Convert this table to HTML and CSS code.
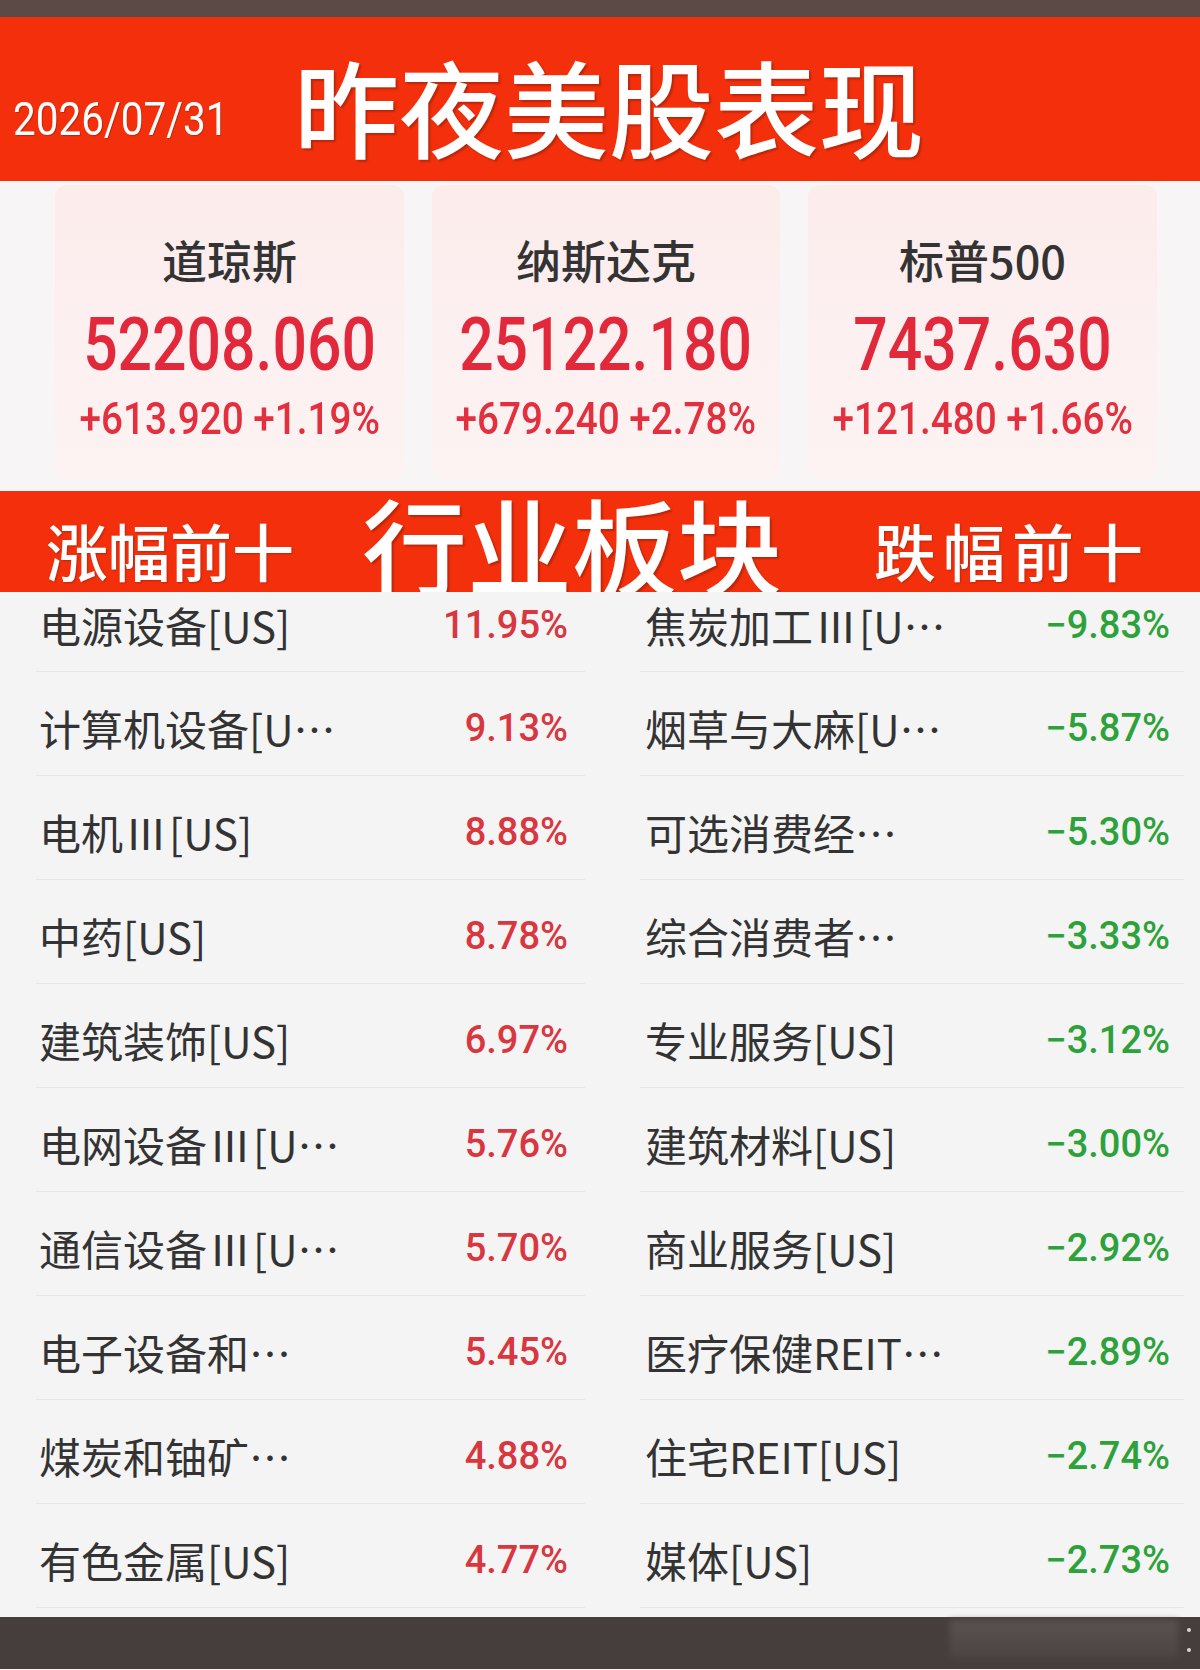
FILE: index.html
```html
<!DOCTYPE html>
<html lang="zh-CN">
<head>
<meta charset="utf-8">
<title>昨夜美股表现</title>
<link rel="stylesheet" href="styles.css">
</head>
<body>
<div class="page">
  <div class="topbar"></div>
  <header class="header">
    <div class="date"><span class="cond">2026/07/31</span></div>
    <h1 class="title">昨夜美股表现</h1>
  </header>

  <section class="cards">
    <div class="card">
      <div class="card-name">道琼斯</div>
      <div class="card-value"><span class="cond">52208.060</span></div>
      <div class="card-change"><span class="cond">+613.920 +1.19%</span></div>
    </div>
    <div class="card">
      <div class="card-name">纳斯达克</div>
      <div class="card-value"><span class="cond">25122.180</span></div>
      <div class="card-change"><span class="cond">+679.240 +2.78%</span></div>
    </div>
    <div class="card">
      <div class="card-name">标普500</div>
      <div class="card-value"><span class="cond">7437.630</span></div>
      <div class="card-change"><span class="cond">+121.480 +1.66%</span></div>
    </div>
  </section>

  <div class="sector-bar">
    <span class="side-label up-label">涨幅前十</span>
    <span class="sector-title">行业板块</span>
    <span class="side-label down-label">跌幅前十</span>
  </div>

  <section class="lists">
    <ul class="list">
      <li class="row"><span class="name">电源设备[US]</span><span class="pct up">11.95%</span></li>
      <li class="row"><span class="name">计算机设备[U…</span><span class="pct up">9.13%</span></li>
      <li class="row"><span class="name">电机<span class="roman">Ⅲ</span>[US]</span><span class="pct up">8.88%</span></li>
      <li class="row"><span class="name">中药[US]</span><span class="pct up">8.78%</span></li>
      <li class="row"><span class="name">建筑装饰[US]</span><span class="pct up">6.97%</span></li>
      <li class="row"><span class="name">电网设备<span class="roman">Ⅲ</span>[U…</span><span class="pct up">5.76%</span></li>
      <li class="row"><span class="name">通信设备<span class="roman">Ⅲ</span>[U…</span><span class="pct up">5.70%</span></li>
      <li class="row"><span class="name">电子设备和…</span><span class="pct up">5.45%</span></li>
      <li class="row"><span class="name">煤炭和铀矿…</span><span class="pct up">4.88%</span></li>
      <li class="row"><span class="name">有色金属[US]</span><span class="pct up">4.77%</span></li>
    </ul>
    <ul class="list list-right">
      <li class="row"><span class="name">焦炭加工<span class="roman">Ⅲ</span>[U…</span><span class="pct down">−9.83%</span></li>
      <li class="row"><span class="name">烟草与大麻[U…</span><span class="pct down">−5.87%</span></li>
      <li class="row"><span class="name">可选消费经…</span><span class="pct down">−5.30%</span></li>
      <li class="row"><span class="name">综合消费者…</span><span class="pct down">−3.33%</span></li>
      <li class="row"><span class="name">专业服务[US]</span><span class="pct down">−3.12%</span></li>
      <li class="row"><span class="name">建筑材料[US]</span><span class="pct down">−3.00%</span></li>
      <li class="row"><span class="name">商业服务[US]</span><span class="pct down">−2.92%</span></li>
      <li class="row"><span class="name">医疗保健REIT…</span><span class="pct down">−2.89%</span></li>
      <li class="row"><span class="name">住宅REIT[US]</span><span class="pct down">−2.74%</span></li>
      <li class="row"><span class="name">媒体[US]</span><span class="pct down">−2.73%</span></li>
    </ul>
  </section>

  <footer class="bottombar">
    <div class="watermark"></div>
    <div class="dots"><span class="dot"></span><span class="dot"></span></div>
  </footer>
</div>
</body>
</html>
```

FILE: styles.css
```css
* { box-sizing: border-box; }
html, body { margin: 0; padding: 0; }
body {
  width: 1200px;
  height: 1670px;
  overflow: hidden;
  background: #f4f4f4;
  font-family: "Noto Sans CJK SC", "Noto Sans", sans-serif;
}
.page { width: 1200px; display: flex; flex-direction: column; }

.topbar { height: 17px; background: #5b4a46; }

.header {
  height: 164px;
  background: #f4300c;
  display: flex;
  align-items: center;
  padding-top: 10px;
}
.date {
  width: 294px;
  padding-left: 13px;
  margin-top: 30px;
  color: #ffffff;
  font-family: Roboto, "Liberation Sans", sans-serif;
  font-size: 46px;
  line-height: 50px;
  text-shadow: 1px 1px 1px rgba(90, 20, 10, 0.35);
}
.date .cond { display: inline-block; transform: scaleX(0.88); transform-origin: left center; }
.title {
  margin: 0;
  color: #ffffff;
  font-size: 105px;
  line-height: 110px;
  font-weight: 500;
  letter-spacing: 0;
  text-shadow: 2px 2px 2px rgba(80, 20, 10, 0.35);
}

.cards {
  height: 310px;
  background: #f7f5f5;
  display: flex;
  gap: 28px;
  padding: 4px 0 0 55px;
}
.card {
  width: 349px;
  height: 295px;
  border-radius: 12px;
  background: linear-gradient(180deg, #fcecec 0%, #fdf3f3 100%);
  display: flex;
  flex-direction: column;
  align-items: center;
  padding-top: 50px;
}
.card:nth-child(2) { width: 348px; }
.card-name {
  font-size: 45px;
  line-height: 50px;
  font-weight: 500;
  color: #333333;
}
.card-value {
  margin-top: 25px;
  font-family: Roboto, "Liberation Sans", sans-serif;
  font-size: 74px;
  line-height: 70px;
  font-weight: 500;
  color: #e2283b;
}
.card-change {
  margin-top: 19px;
  font-family: Roboto, "Liberation Sans", sans-serif;
  font-size: 45px;
  line-height: 40px;
  font-weight: 500;
  color: #e2303f;
}
.cond { display: inline-block; transform: scaleX(0.82); white-space: nowrap; }
.card-change .cond { transform: scaleX(0.86); }

.sector-bar {
  height: 101px;
  background: #f4300c;
  display: flex;
  align-items: center;
  padding-left: 46px;
  color: #ffffff;
  white-space: nowrap;
}
.side-label {
  font-size: 62px;
  line-height: 70px;
  font-weight: 500;
  margin-top: 16px;
  text-shadow: 1px 1px 2px rgba(80, 20, 10, 0.35);
}
.sector-title {
  margin-left: 68px;
  font-size: 105px;
  line-height: 100px;
  font-weight: 500;
  text-shadow: 2px 2px 2px rgba(80, 20, 10, 0.35);
}
.down-label { margin-left: 92px; letter-spacing: 7px; }

.lists {
  height: 1025px;
  background: #f4f4f4;
  display: grid;
  grid-template-columns: 549px 544px;
  column-gap: 55px;
  padding-left: 36px;
}
.list { list-style: none; margin: 0; padding: 0; }
.row {
  height: 104px;
  padding: 9px 17px 0 3px;
  display: flex;
  justify-content: space-between;
  align-items: center;
  border-bottom: 1px solid #e7e7e7;
}
.row:first-child { height: 80px; padding-top: 0; padding-bottom: 13px; }
.list-right .row { padding-right: 14px; padding-left: 5px; }
.name {
  font-size: 42px;
  line-height: 50px;
  color: #333333;
  white-space: nowrap;
}
.roman { margin: 0 2px; }
.pct {
  font-family: Roboto, "Liberation Sans", sans-serif;
  font-size: 38px;
  line-height: 44px;
  font-weight: 500;
}
.pct.up { color: #d9373f; }
.pct.down { color: #2ea23a; }

.bottombar {
  height: 52px;
  background: #463e3c;
  display: flex;
  justify-content: flex-end;
  align-items: flex-start;
  padding-top: 3px;
}
.watermark {
  width: 228px;
  height: 38px;
  background: linear-gradient(180deg, #5b5553 0%, #4d4644 100%);
  filter: blur(3px);
  opacity: 0.9;
}
.dots {
  width: 22px;
  height: 40px;
  display: flex;
  flex-direction: column;
  justify-content: space-around;
  align-items: center;
}
.dot { width: 4px; height: 4px; border-radius: 50%; background: #d8d4d3; }
```
